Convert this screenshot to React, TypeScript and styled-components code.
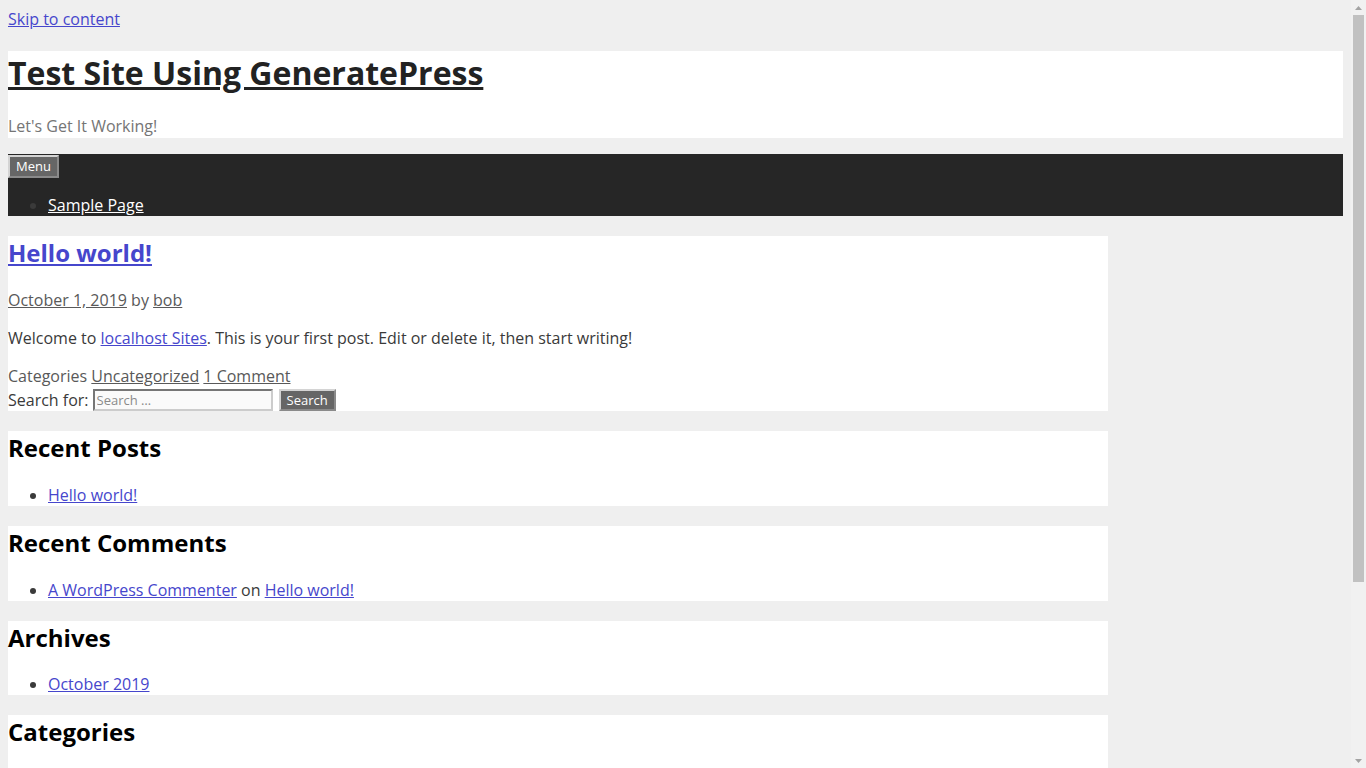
import React from "react";
import styled, { createGlobalStyle } from "styled-components";

const Global = createGlobalStyle`
  html, body { margin: 0; height: 100%; overflow: hidden; }
  body {
    background: #efefef;
    font-family: "Open Sans", "Noto Sans", sans-serif;
    font-size: 16px;
    line-height: normal;
    color: #3a3a3a;
  }
`;

const Frame = styled.div`
  display: flex;
  height: 100vh;
`;

const Page = styled.div`
  flex: 1;
  min-width: 0;
  padding: 8px;
  overflow: hidden;
`;

const ScrollTrack = styled.div`
  width: 15px;
  flex: none;
  background: #f1f1f1;
  display: flex;
  flex-direction: column;
  align-items: center;
`;

const ArrowBox = styled.div`
  height: 15px;
  width: 15px;
  display: flex;
  align-items: center;
  justify-content: center;
`;

const Spacer = styled.div`
  flex: 1;
`;

const Thumb = styled.div`
  width: 11px;
  height: 567px;
  background: #c1c1c1;
`;

const Link = styled.a<{ $tone?: "blue" | "gray" | "white" | "dark" }>`
  color: ${(p) =>
    p.$tone === "gray"
      ? "#595959"
      : p.$tone === "white"
      ? "#ffffff"
      : p.$tone === "dark"
      ? "#222222"
      : "#4646cc"};
  text-decoration: underline;
`;

const SkipRow = styled.div`
  margin-bottom: 21px;
`;

const Header = styled.header`
  background: #ffffff;
  height: 87px;
`;

const SiteTitle = styled.h1`
  margin: 0 0 21.4px;
  font-size: 32px;
  line-height: normal;
  font-weight: 700;
`;

const Tagline = styled.p`
  margin: 0;
  color: #757575;
`;

const Nav = styled.nav`
  margin-top: 16px;
  background: #262626;
  height: 62px;
  overflow: hidden;
`;

const GrayButton = styled.button`
  display: block;
  box-sizing: border-box;
  background: #666666;
  color: #ffffff;
  font-family: "Open Sans", "Noto Sans", sans-serif;
  font-size: 13px;
  line-height: 1;
  padding: 1px 6px;
  border: 2px solid;
  border-color: #d4d4d4 #8a8a8a #8a8a8a #d4d4d4;
  height: 23.5px;
  margin-top: 0.5px;
  cursor: pointer;
`;

const NavList = styled.ul`
  margin: 16px 0 0;
  padding-left: 40px;
`;

const Card = styled.div`
  width: 1100px;
  background: #ffffff;
  margin-top: 20px;
`;

const PostTitle = styled.h2`
  margin: 0 0 20px;
  font-size: 24px;
  line-height: normal;
  font-weight: 700;
`;

const Meta = styled.div`
  color: #595959;
  margin-bottom: 16px;
`;

const Para = styled.p`
  margin: 0 0 16px;
`;

const Footer = styled.div`
  color: #595959;
`;

const SearchForm = styled.form`
  display: flex;
  align-items: center;
  padding: 2px 0 0.4px;
`;

const Label = styled.label`
  color: #3a3a3a;
  margin-right: 4px;
`;

const Input = styled.input`
  box-sizing: border-box;
  width: 180px;
  height: 21.7px;
  border: 2px solid;
  border-color: #767676 #cccccc #cccccc #767676;
  background: #fafafa;
  font-family: "Open Sans", "Noto Sans", sans-serif;
  font-size: 13px;
  padding: 1px 2px;
  margin: 0 6px 0 0;
  &::placeholder {
    color: #8a8a8a;
  }
`;

const InlineButton = styled(GrayButton)`
  margin: 0;
  height: 21.7px;
`;

const WidgetTitle = styled.h2`
  margin: 0 0 19.6px;
  font-size: 24px;
  line-height: normal;
  font-weight: 700;
  color: #000000;
`;

const List = styled.ul`
  margin: 0;
  padding-left: 40px;
`;

const widgets: { title: string; items: React.ReactNode[] }[] = [
  { title: "Recent Posts", items: [<Link href="#">Hello world!</Link>] },
  {
    title: "Recent Comments",
    items: [
      <>
        <Link href="#">A WordPress Commenter</Link> on <Link href="#">Hello world!</Link>
      </>,
    ],
  },
  { title: "Archives", items: [<Link href="#">October 2019</Link>] },
  { title: "Categories", items: [<Link href="#">Uncategorized</Link>] },
  {
    title: "Meta",
    items: [
      <Link href="#">Log in</Link>,
      <Link href="#">Entries RSS</Link>,
      <Link href="#">Comments RSS</Link>,
      <Link href="#">WordPress.org</Link>,
    ],
  },
];

const Arrow = ({ up }: { up?: boolean }) => (
  <svg width="7" height="4" viewBox="0 0 7 4">
    <polygon points={up ? "0,4 3.5,0 7,4" : "0,0 3.5,4 7,0"} fill="#a3a3a3" />
  </svg>
);

export default function App() {
  return (
    <>
      <Global />
      <Frame>
        <Page>
          <SkipRow>
            <Link href="#">Skip to content</Link>
          </SkipRow>
          <Header>
            <SiteTitle>
              <Link href="#" $tone="dark">
                Test Site Using GeneratePress
              </Link>
            </SiteTitle>
            <Tagline>Let's Get It Working!</Tagline>
          </Header>
          <Nav>
            <GrayButton type="button">Menu</GrayButton>
            <NavList>
              <li>
                <Link href="#" $tone="white">
                  Sample Page
                </Link>
              </li>
            </NavList>
          </Nav>
          <Card>
            <PostTitle>
              <Link href="#">Hello world!</Link>
            </PostTitle>
            <Meta>
              <Link href="#" $tone="gray">
                October 1, 2019
              </Link>{" "}
              by{" "}
              <Link href="#" $tone="gray">
                bob
              </Link>
            </Meta>
            <Para>
              Welcome to <Link href="#">localhost Sites</Link>. This is your first post. Edit or
              delete it, then start writing!
            </Para>
            <Footer>
              Categories{" "}
              <Link href="#" $tone="gray">
                Uncategorized
              </Link>{" "}
              <Link href="#" $tone="gray">
                1 Comment
              </Link>
            </Footer>
            <SearchForm onSubmit={(e) => e.preventDefault()}>
              <Label>Search for:</Label>
              <Input type="search" placeholder="Search …" />
              <InlineButton type="submit">Search</InlineButton>
            </SearchForm>
          </Card>
          {widgets.map((w) => (
            <Card key={w.title}>
              <WidgetTitle>{w.title}</WidgetTitle>
              <List>
                {w.items.map((it, i) => (
                  <li key={i}>{it}</li>
                ))}
              </List>
            </Card>
          ))}
        </Page>
        <ScrollTrack>
          <ArrowBox>
            <Arrow up />
          </ArrowBox>
          <Thumb />
          <Spacer />
          <ArrowBox>
            <Arrow />
          </ArrowBox>
        </ScrollTrack>
      </Frame>
    </>
  );
}
